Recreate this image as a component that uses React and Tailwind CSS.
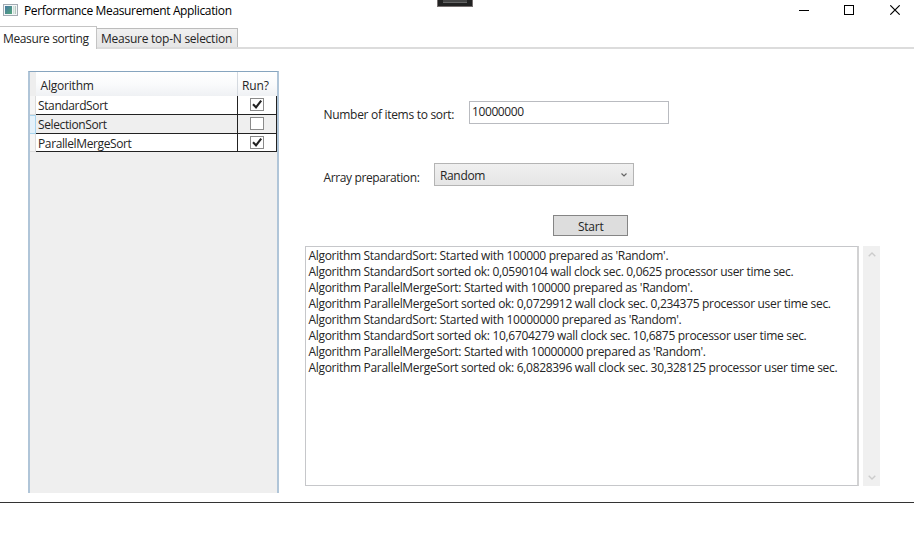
import React from "react";

const LOG = [
  "Algorithm StandardSort: Started with 100000 prepared as 'Random'.",
  "Algorithm StandardSort sorted ok: 0,0590104 wall clock sec. 0,0625 processor user time sec.",
  "Algorithm ParallelMergeSort: Started with 100000 prepared as 'Random'.",
  "Algorithm ParallelMergeSort sorted ok: 0,0729912 wall clock sec. 0,234375 processor user time sec.",
  "Algorithm StandardSort: Started with 10000000 prepared as 'Random'.",
  "Algorithm StandardSort sorted ok: 10,6704279 wall clock sec. 10,6875 processor user time sec.",
  "Algorithm ParallelMergeSort: Started with 10000000 prepared as 'Random'.",
  "Algorithm ParallelMergeSort sorted ok: 6,0828396 wall clock sec. 30,328125 processor user time sec.",
];

function TitleBar() {
  return (
    <header className="flex h-[26px] items-start text-black">
      <svg className="ml-[3px] mt-[4px] h-[12px] w-[15px] shrink-0" viewBox="0 0 15 12">
        <rect x="0.5" y="0.5" width="14" height="11" fill="#f4f6f8" stroke="#a3abb2" />
        <defs>
          <linearGradient id="pane" x1="0" y1="0" x2="1" y2="1">
            <stop offset="0" stopColor="#4778a0" />
            <stop offset="1" stopColor="#52a67b" />
          </linearGradient>
        </defs>
        <rect x="2" y="2" width="7" height="8" fill="url(#pane)" />
        <rect x="10" y="2" width="1.5" height="8" fill="#cfe0d8" />
        <rect x="12" y="2" width="1" height="8" fill="#b4c9c0" />
      </svg>
      <span className="ml-[6px] mt-[2px] w-[213px] whitespace-nowrap leading-[18px] tracking-[-0.35px]">
        Performance Measurement Application
      </span>
      <div className="ml-[200px] flex h-[7px] w-[36px] flex-col border-x border-b border-[#777070] bg-[#222] px-[5px]">
        <div className="h-[3px] border-b border-[#666] bg-[#444]" />
      </div>
      <svg className="ml-auto mr-[13px] mt-[5px] h-[10px] w-[102px]" viewBox="0 0 102 10" fill="none" stroke="#000">
        <path d="M0 5.5H10M45.5 0.5H54.5V9.5H45.5Z" shapeRendering="crispEdges" />
        <path d="M91.3 0.3L100.7 9.7M100.7 0.3L91.3 9.7" strokeWidth="1.1" />
      </svg>
    </header>
  );
}

function Tabs() {
  return (
    <nav className="flex h-[23px] items-end">
      <div className="h-[23px] w-[97px] border-r border-t border-[#c4c4c4] bg-white pl-[3px] leading-[23px] tracking-[-0.36px]">
        Measure sorting
      </div>
      <div className="flex h-[23px] flex-1 items-end border-b-2 border-[#dcdcdc]">
        <div className="h-[19px] w-[141px] border-r border-t border-[#bcbcbc] bg-gradient-to-b from-[#f0f0f0] to-[#e6e6e6] pl-[4px] leading-[20px] tracking-[-0.25px]">
          Measure top-N selection
        </div>
      </div>
    </nav>
  );
}

function Check({ on }) {
  return (
    <svg className="h-[14px] w-[14px]" viewBox="0 0 14 14">
      <rect x="0.5" y="0.5" width="13" height="12" fill="#fff" stroke="#8a8a8a" />
      {on && <path d="M3 6.3L6 9.3L11.2 2.6" fill="none" stroke="#222" strokeWidth="2.1" />}
    </svg>
  );
}

function Row({ name, on, shaded, size }) {
  return (
    <div className={`flex ${size}`}>
      <div className={`w-[6px] border-b border-r ${shaded ? "border-t border-[#a9d5ee] bg-[#e4f1fa]" : "border-[#dcdcdc] bg-[#f5f5f5]"}`} />
      <div className={`flex flex-1 border-b border-r border-[#222] ${shaded ? "bg-[#efefef]" : "bg-white"}`}>
        <div className="w-[202px] border-r border-[#222] pl-[2px] leading-[20px] tracking-[-0.38px]">{name}</div>
        <div className="flex flex-1 items-start justify-center pt-[2px]">
          <Check on={on} />
        </div>
      </div>
    </div>
  );
}

function AlgorithmGrid() {
  return (
    <section className="ml-[28px] mt-[22px] h-[422px] w-[251px] border-x-2 border-t border-x-[#b0c5d8] border-t-[#87a5bf] bg-[#efefef]">
      <div className="flex h-[24px]">
        <div className="w-[6px] bg-[#eeeeee]" />
        <div className="flex flex-1 bg-gradient-to-b from-white via-[#fafbfc] to-[#eff1f4]">
          <div className="w-[202px] border-r border-[#d5dae0] pl-[4.5px] leading-[27px] tracking-[-0.2px]">Algorithm</div>
          <div className="pl-[4px] leading-[27px] tracking-[-0.1px]">Run?</div>
        </div>
      </div>
      <Row name="StandardSort" on size="h-[19px]" />
      <Row name="SelectionSort" shaded size="h-[19px]" />
      <Row name="ParallelMergeSort" on size="h-[18px]" />
    </section>
  );
}

function LogPanel() {
  return (
    <div className="mt-[10px] flex h-[240px] gap-[4px]">
      <div className="w-[554px] whitespace-nowrap border border-r-2 border-[#c6c7ca] border-r-[#d2d2d3] bg-white pl-[2.5px] pt-[1px]">
        {LOG.map((line) => (
          <div key={line} className="h-[16px] leading-[16px] tracking-[-0.31px]">{line}</div>
        ))}
      </div>
      <div className="flex h-[240px] w-[17px] flex-col items-center justify-between bg-[#f0f0f0] py-[6px]">
        <svg className="h-[5px] w-[8px]" viewBox="0 0 8 5" fill="none" stroke="#ccc" strokeWidth="1.4">
          <path d="M0.7 4.3L4 1L7.3 4.3" />
        </svg>
        <svg className="h-[5px] w-[8px]" viewBox="0 0 8 5" fill="none" stroke="#ccc" strokeWidth="1.4">
          <path d="M0.7 0.7L4 4L7.3 0.7" />
        </svg>
      </div>
    </div>
  );
}

export default function App() {
  return (
    <div className="flex h-[548px] w-[914px] flex-col overflow-hidden bg-white font-['Open_Sans','Noto_Sans',sans-serif] text-[12px] text-[#252525]">
      <TitleBar />
      <Tabs />
      <main className="flex h-[454px] border-b border-[#333]">
        <AlgorithmGrid />
        <section className="ml-[26px] flex flex-col pt-[52px]">
          <div className="flex h-[23px] pl-[18px]">
            <label className="w-[146px] pl-[0.5px] pt-[4px] leading-[20px] tracking-[-0.3px]">Number of items to sort:</label>
            <div className="w-[200px] border border-[#b9bbc0] bg-white pl-[2px] leading-[19px] tracking-[-0.4px]">10000000</div>
          </div>
          <div className="mt-[39px] flex h-[23px] pl-[18px]">
            <label className="w-[111px] pl-[0.5px] pt-[5px] leading-[20px] tracking-[-0.38px]">Array preparation:</label>
            <div className="flex w-[200px] items-center justify-between border border-[#b4b4b4] bg-gradient-to-b from-[#f0f0f0] to-[#e5e5e5] pl-[5px] pr-[6px]">
              <span className="pt-[2px] leading-[20px] tracking-[-0.35px]">Random</span>
              <svg className="h-[4px] w-[6px]" viewBox="0 0 6 4" fill="none" stroke="#666" strokeWidth="1.2">
                <path d="M0.5 0.5L3 3L5.5 0.5" />
              </svg>
            </div>
          </div>
          <button className="ml-[247.5px] mt-[29px] h-[21px] w-[75.5px] border border-[#858585] bg-[#dddddd] pl-px leading-[21px] tracking-[-0.2px]">
            Start
          </button>
          <LogPanel />
        </section>
      </main>
    </div>
  );
}
